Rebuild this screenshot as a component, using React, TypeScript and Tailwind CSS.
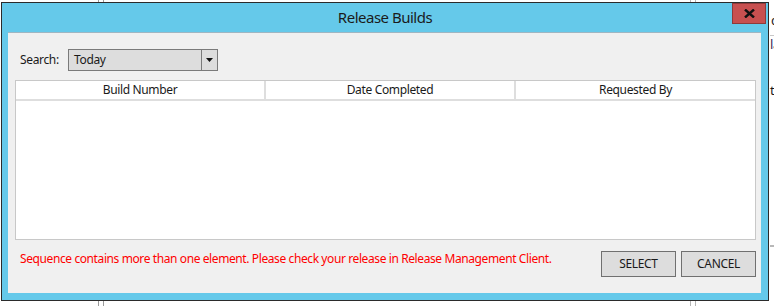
export default function App() {
  const cols = ['Build Number', 'Date Completed', 'Requested By']

  return (
    <div className="relative h-[306px] w-[774px] overflow-hidden bg-white font-['Noto_Sans',sans-serif] text-[12px] tracking-[-0.35px] text-[#1a1a1a]">
      {/* bits of the windows behind the dialog */}
      <div className="absolute left-[98px] top-0 h-full w-[6px] border-x border-[#9a9a9a]" />
      <div className="absolute left-[690px] top-0 h-full w-[6px] border-x border-[#b4b4b4]" />
      <div className="absolute left-[770px] top-[35px] h-px w-[4px] bg-[#c8c8c8]" />
      <div className="absolute left-[770px] top-[245px] h-[2px] w-[4px] bg-[#b8b8b8]" />
      <span className="absolute left-[771px] top-[14px] text-[13px] leading-none">c</span>
      <span className="absolute left-[770px] top-[38px] text-[13px] leading-none text-[#3a2a5a]">la</span>
      <span className="absolute left-[770px] top-[84px] text-[13px] leading-none">t</span>

      <div className="relative pl-[1px] pt-[2px]">
        <div className="h-[299px] w-[768px] border border-[#2b2b2b] bg-[#65c9ea]">
          {/* title bar */}
          <div className="relative flex h-[29px] items-center justify-center">
            <span className="pb-[1px] text-[15px] tracking-[-0.5px] text-[#1b1b1b]">Release Builds</span>
            <button className="absolute right-[2px] top-0 flex h-[21px] w-[34px] items-center justify-center border border-[#8e3a3a] bg-[#c75050]">
              <svg width="11" height="9" viewBox="0 0 11 9">
                <path d="M1 0.5 L10 8.5 M10 0.5 L1 8.5" stroke="#111" strokeWidth="2.4" />
              </svg>
            </button>
          </div>

          {/* client area */}
          <div className="ml-[6px] flex h-[261px] w-[753px] flex-col border-t border-[#9fb6c2] bg-[#f0f0f0] pl-[7px] pr-[5px]">
            <div className="mt-[16px] flex items-center pl-[5px]">
              <span className="w-[48px]">Search:</span>
              <div className="flex h-[22px] w-[150px] border border-[#7a7a7a] bg-[#dddddd]">
                <span className="flex-1 pl-[5px] leading-[20px]">Today</span>
                <span className="flex w-[16px] items-center justify-center border-l border-[#7a7a7a]">
                  <svg width="7" height="4" viewBox="0 0 7 4">
                    <path d="M0 0 H7 L3.5 4 Z" fill="#111" />
                  </svg>
                </span>
              </div>
            </div>

            <div className="mt-[9px] h-[160px] border border-[#c8c8c8] bg-white">
              <div className="grid h-[20px] grid-cols-[250px_250px_1fr] border-b-2 border-[#dedede]">
                {cols.map((c, i) => (
                  <div
                    key={c}
                    className={`flex items-center justify-center leading-none ${i < 2 ? 'border-r-2 border-[#dedede]' : ''}`}
                  >
                    {c}
                  </div>
                ))}
              </div>
            </div>

            <div className="mt-[11px] flex items-start justify-between pl-[5px]">
              <span className="leading-[16px] tracking-[-0.4px] text-[#ff0000]">
                Sequence contains more than one element. Please check your release in Release Management Client.
              </span>
              <div className="flex gap-[5px]">
                <button className="h-[26px] w-[75px] border border-[#707070] bg-[#dddddd] leading-none">SELECT</button>
                <button className="h-[26px] w-[75px] border border-[#707070] bg-[#dddddd] leading-none">CANCEL</button>
              </div>
            </div>
          </div>
        </div>
      </div>
    </div>
  )
}
